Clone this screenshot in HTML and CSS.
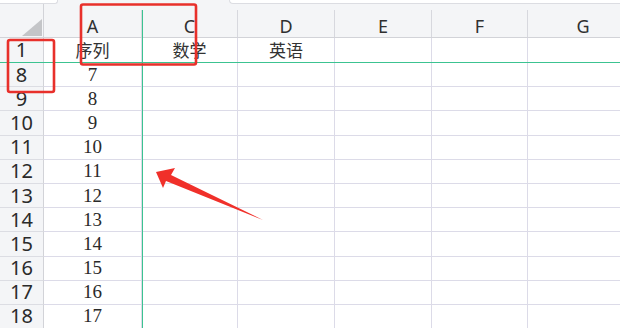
FILE: index.html
```html
<html>
	<head>
		<meta charset="utf-8" />
		<title>工作表</title>
		<link rel="stylesheet" href="styles.css">
	</head>
	<body>
		<div class="sheet">
			<div class="topbar">
				<div class="box-left"></div>
				<div class="box-right"></div>
			</div>
			<div class="row head">
				<div class="corner"><span class="tri"></span></div>
				<div class="col">A</div>
				<div class="col">C</div>
				<div class="col">D</div>
				<div class="col">E</div>
				<div class="col">F</div>
				<div class="col last">G</div>
			</div>
			<div class="row first">
				<div class="num">1</div>
				<div class="cell cjk">序列</div>
				<div class="cell cjk">数学</div>
				<div class="cell cjk">英语</div>
				<div class="cell"></div>
				<div class="cell"></div>
				<div class="cell"></div>
			</div>
			<div class="row"><div class="num">8</div><div class="cell">7</div><div class="cell"></div><div class="cell"></div><div class="cell"></div><div class="cell"></div><div class="cell"></div></div>
			<div class="row"><div class="num">9</div><div class="cell">8</div><div class="cell"></div><div class="cell"></div><div class="cell"></div><div class="cell"></div><div class="cell"></div></div>
			<div class="row"><div class="num">10</div><div class="cell">9</div><div class="cell"></div><div class="cell"></div><div class="cell"></div><div class="cell"></div><div class="cell"></div></div>
			<div class="row"><div class="num">11</div><div class="cell">10</div><div class="cell"></div><div class="cell"></div><div class="cell"></div><div class="cell"></div><div class="cell"></div></div>
			<div class="row"><div class="num">12</div><div class="cell">11</div><div class="cell"></div><div class="cell"></div><div class="cell"></div><div class="cell"></div><div class="cell"></div></div>
			<div class="row"><div class="num">13</div><div class="cell">12</div><div class="cell"></div><div class="cell"></div><div class="cell"></div><div class="cell"></div><div class="cell"></div></div>
			<div class="row"><div class="num">14</div><div class="cell">13</div><div class="cell"></div><div class="cell"></div><div class="cell"></div><div class="cell"></div><div class="cell"></div></div>
			<div class="row"><div class="num">15</div><div class="cell">14</div><div class="cell"></div><div class="cell"></div><div class="cell"></div><div class="cell"></div><div class="cell"></div></div>
			<div class="row"><div class="num">16</div><div class="cell">15</div><div class="cell"></div><div class="cell"></div><div class="cell"></div><div class="cell"></div><div class="cell"></div></div>
			<div class="row"><div class="num">17</div><div class="cell">16</div><div class="cell"></div><div class="cell"></div><div class="cell"></div><div class="cell"></div><div class="cell"></div></div>
			<div class="row"><div class="num">18</div><div class="cell">17</div><div class="cell"></div><div class="cell"></div><div class="cell"></div><div class="cell"></div><div class="cell"></div></div>

			<!-- freeze lines and annotations drawn over the sheet -->
			<svg class="marks" width="620" height="328" viewBox="0 0 620 328">
				<line x1="142.5" y1="10" x2="142.5" y2="328" stroke="#3cc391" stroke-width="1"/>
				<line x1="0" y1="62.5" x2="620" y2="62.5" stroke="#3cc391" stroke-width="1"/>
				<rect x="8" y="40" width="46" height="52" rx="2" fill="none" stroke="#e8302b" stroke-width="2.6"/>
				<rect x="81" y="4.5" width="115" height="60" rx="2" fill="none" stroke="#e8302b" stroke-width="2.6"/>
				<polygon points="156,172 175,168 171,175 263,220 166,181 163,188" fill="#f0302a"/>
			</svg>
		</div>
	</body>
</html>
```

FILE: styles.css
```css
body { margin: 0; background-color: #ffffff; font-family: "Noto Sans", "Noto Sans CJK SC", sans-serif; color: #2b2b2b; overflow: hidden; }
.sheet { position: relative; width: 620px; height: 328px; overflow: hidden; }

.topbar { display: flex; height: 4px; background: #f4f5f7; }
.box-left { width: 57px; height: 3px; background: #ffffff; border-bottom: 1px solid #dcdde2; border-right: 1px solid #dcdde2; border-bottom-right-radius: 3px; }
.box-right { flex: 1; margin-left: 171px; height: 3px; background: #ffffff; border-bottom: 1px solid #dcdde2; border-left: 1px solid #dcdde2; border-bottom-left-radius: 4px; }

.row {
	display: grid;
	grid-template-columns: 44px 98px 96px 97px 97px 96px 110px;
	height: 24.2px;
}
.head { height: 34px; background: #f4f5f7; border-bottom: 1px solid #d2d3d8; box-sizing: border-box; }
.first { height: 25px; }
.first .num, .first .cell { border-bottom-color: transparent; }

.corner { border-right: 1px solid #d2d3d8; }
.tri { display: block; width: 0; height: 0; margin: 15px 0 0 22px; border-left: 20px solid transparent; border-bottom: 17px solid #c4c5c8; }

.col {
	display: flex; align-items: center; justify-content: center;
	margin-top: 6px; padding-top: 4px;
	border-right: 1px solid #d7d8de;
	font-size: 18px; line-height: 20px; color: #303030;
}
.col.last { border-right: none; }

.num {
	display: flex; align-items: center; justify-content: center;
	background: #f4f5f7;
	border-right: 1px solid #d2d3d8; border-bottom: 1px solid #dcdde3;
	font-size: 20px; line-height: 20px; color: #2a2a2a;
}
.cell {
	display: flex; align-items: center; justify-content: center;
	border-right: 1px solid #dcdbe8; border-bottom: 1px solid #dcdbe8;
	font-family: "Liberation Serif", serif; font-size: 19px; line-height: 20px; color: #2a2a2a;
}
.cell.cjk { font-family: "Noto Sans CJK SC", sans-serif; font-size: 17px; color: #333333; }

.marks { position: absolute; left: 0; top: 0; pointer-events: none; }
```
